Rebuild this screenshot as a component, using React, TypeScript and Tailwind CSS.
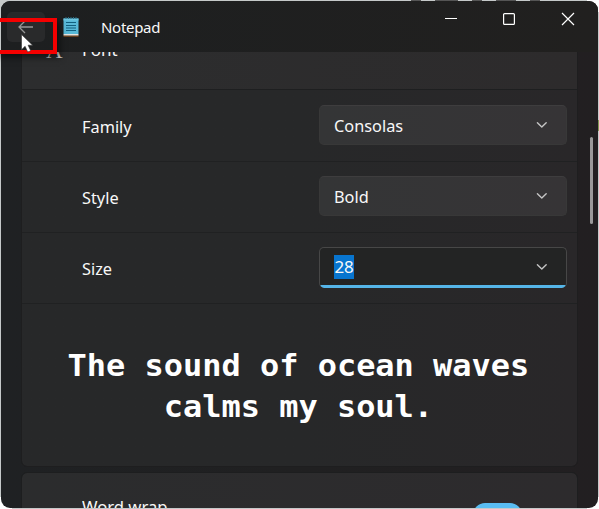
import type { ReactNode } from "react";

function Chevron() {
  return (
    <svg width="12" height="8" viewBox="0 0 12 8" fill="none" stroke="#c4c4c4" strokeWidth="1.4">
      <path d="M1.4 1.7 5.8 6.1 10.2 1.7" strokeLinecap="round" strokeLinejoin="round" />
    </svg>
  );
}

function Row({ label, first = false, children }: { label: string; first?: boolean; children: ReactNode }) {
  return (
    <div
      className={`flex items-start justify-between border-b border-[#202122] pr-[10px] pl-[60px] ${
        first ? "h-[72px] pt-[15px]" : "h-[71px] pt-[14px]"
      }`}
    >
      <span className="mt-[10px] origin-left scale-x-[0.96] leading-6">{label}</span>
      {children}
    </div>
  );
}

function Select({ value }: { value: string }) {
  return (
    <button className="flex h-10 w-[248px] items-center justify-between rounded-[5px] border border-[#383838] border-t-[#3e3d3e] bg-linear-to-r from-[#343536] to-[#363436] pr-[18px] pl-[14px]">
      <span className="mt-px origin-left scale-x-[0.96] leading-6">{value}</span>
      <Chevron />
    </button>
  );
}

function NotepadIcon() {
  return (
    <svg width="16" height="21" viewBox="0 0 16 21">
      <path d="M.5 18.3h15v1.7H.5z" fill="#68401f" />
      <path d="M.5 17h15v1.5H.5z" fill="#e8e4de" />
      <path d="M.5 1.5h15V17H.5z" fill="#58b9d8" />
      <path d="M.5 1.5h15v2H.5z" fill="#6cc6e0" />
      <path d="M3 5.5h10M3 8.5h10M3 11h10M3 13.5h10" stroke="#12607f" strokeWidth="1.1" />
      <path d="M3 0v2M5.5 0v2M8 0v2M10.5 0v2M13 0v2" stroke="#2d6f86" />
    </svg>
  );
}

export default function App() {
  return (
    <div className="relative h-[509px] w-[599px] overflow-hidden bg-[#c5c9c9] pt-px pl-px font-['Noto_Sans','Open_Sans',sans-serif] text-[17px] text-[#f8f8f8]">
      <div className="absolute top-0 right-0 size-3 bg-white" />
      <div className="absolute right-0 bottom-0 size-3 bg-white" />
      <div className="absolute bottom-0 left-0 size-3 bg-white" />
      <div className="absolute top-[120px] right-0 h-[11px] w-1 bg-[#809755]" />
      <div className="absolute top-0 left-[411px] flex gap-[14px]">
        <i className="h-px w-[10px] bg-[#555]" />
        <i className="h-px w-[23px] bg-[#555]" />
        <i className="h-px w-[10px] bg-[#555]" />
        <i className="h-px w-[20px] bg-[#555]" />
        <i className="h-px w-[10px] bg-[#555]" />
      </div>
      <main className="relative flex h-[507px] w-[597px] flex-col overflow-hidden rounded-[9px] bg-linear-to-r from-[#1f2123] via-[#202021] to-[#221f21]">
        <header className="flex h-[51px] shrink-0 bg-linear-to-r from-[#1d1f20] to-[#21201f]">
          <button className="mt-[11px] ml-[6px] flex h-[30px] w-[38px] justify-center rounded-[5px] bg-[#292a2b] pt-[8px]">
            <svg width="16" height="14" viewBox="0 0 16 14" fill="none" stroke="#969696" strokeWidth="1.3">
              <path d="M15 7H1M7 1 1 7l6 6" />
            </svg>
          </button>
          <div className="mt-[16px] ml-[18px]">
            <NotepadIcon />
          </div>
          <h1 className="mt-[14px] ml-[22px] text-[15px] leading-6 tracking-[-0.3px]">Notepad</h1>
          <div className="ml-auto flex pt-[11px] pr-[22px]">
            <svg width="132" height="14" viewBox="0 0 132 14" fill="none" stroke="#fff" strokeWidth="1.2">
              <path d="M1 6.5h12" />
              <rect x="59.6" y="1.6" width="10.8" height="10.8" rx="1" />
              <path d="m118 1 12 12M130 1l-12 12" />
            </svg>
          </div>
        </header>
        <div className="relative flex min-h-0 flex-1 flex-col overflow-hidden pl-[21px]">
          <section className="w-[555px] shrink-0 overflow-hidden rounded-b-[5px] bg-linear-to-r from-[#272829] via-[#272829] to-[#292729] outline outline-[#1e1e1f]">
            <div className="flex h-[38px] border-b border-[#1e1f20] bg-linear-to-r from-[#2c2d2e] to-[#2d2b2c]">
              <span className="-mt-[14px] ml-6 w-9 font-['Liberation_Serif',serif] text-[23px] leading-[26px] text-[#dadada]">A</span>
              <span className="-mt-[14px] leading-6">Font</span>
            </div>
            <Row label="Family" first>
              <Select value="Consolas" />
            </Row>
            <Row label="Style">
              <Select value="Bold" />
            </Row>
            <Row label="Size">
              <div className="relative flex h-[41px] w-[248px] items-center justify-between overflow-hidden rounded-[5px] border border-[#474747] border-b-0 bg-[#232424] pr-[18px] pb-[2px] pl-[14px]">
                <span className="flex h-6 w-5 items-center justify-center bg-[#0875cf] tracking-[-0.2px]">28</span>
                <Chevron />
                <i className="absolute right-0 bottom-0 left-0 h-[3px] bg-[#55b5e8]" />
              </div>
            </Row>
            <div className="h-[162px] scale-x-[1.065] pt-[41px] pr-[2px] text-center font-['DejaVu_Sans_Mono',monospace] text-[30px] leading-[41px] font-bold whitespace-nowrap text-white">
              <p>The sound of ocean waves</p>
              <p>calms my soul.</p>
            </div>
          </section>
          <section className="mt-[7px] flex h-[60px] w-[555px] shrink-0 rounded-t-[5px] bg-linear-to-r from-[#2b2c2d] to-[#2d2b2d] pl-[60px] outline outline-[#1d1e1f]">
            <span className="mt-[22px] origin-left scale-x-[0.98] leading-6">Word wrap</span>
            <i className="mt-[30px] mr-[55px] ml-auto h-6 w-[49px] rounded-full bg-[#59bdf2]" />
          </section>
          <div className="absolute top-[85px] right-[5px] h-[87px] w-[3px] rounded-full bg-[#9a999a]" />
        </div>
      </main>
      <div className="absolute top-[18px] -left-1 h-9 w-[61px] border-4 border-[#f50000] shadow-[3px_4px_6px_rgba(0,0,0,0.5)]" />
      <svg className="absolute top-[34px] left-[21px]" width="12" height="20" viewBox="0 0 12 20">
        <path d="M.5.5v15.2l3.6-3.4L6.7 18l3-1.3-2.6-5.5h4.5z" fill="white" stroke="#333" strokeWidth=".6" />
      </svg>
    </div>
  );
}
